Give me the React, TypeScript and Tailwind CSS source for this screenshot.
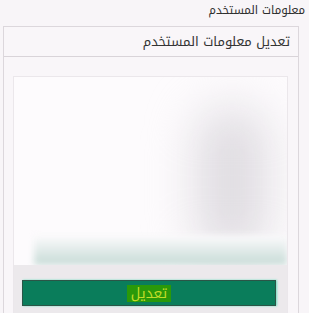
export default function App() {
  return (
    <div
      dir="rtl"
      className="h-[313px] w-[309px] overflow-hidden bg-[#f8f5f8] pr-[4px] pl-[3px] text-[#2f2f2f]"
      style={{
        fontFamily:
          '"Noto Kufi Arabic", "Noto Sans Arabic", "DejaVu Sans Condensed", "DejaVu Sans", sans-serif',
      }}
    >
      <h1 className="pt-[1px] text-[11.5px] leading-[19px]">معلومات المستخدم</h1>

      <div className="mt-[6px] mr-[6px] h-[300px] border border-[#dcd7dc] bg-[#f9f6f9]">
        <div className="flex h-[30px] items-center border-b border-[#d9d4d9] px-[8px]">
          <h2 className="text-[13px] leading-[20px] text-[#333]">
            تعديل معلومات المستخدم
          </h2>
        </div>

        <div className="mt-[19px] mr-[10px] ml-[9px] h-[260px] border border-[#ebe7eb] bg-[#ece9ec]">
          {/* blurred content */}
          <div className="relative h-[188px] overflow-hidden bg-[#fdfbfd]">
            <div className="absolute top-[30px] right-[20px] h-[150px] w-[70px] rounded-full bg-[#dedbe0] blur-xl" />
            <div className="absolute right-0 bottom-0 left-[20px] h-[30px] bg-gradient-to-b from-[#fdfbfd] to-[#c6dbd6] blur-[3px]" />
          </div>

          <div className="pt-[15px] pr-[11px]">
            <button className="flex h-[26px] w-[254px] items-center justify-center border border-[#2b5547] bg-[#0a7d5b] shadow-[1px_0_2px_#6fe0c0]">
              <span className="bg-[#2a9909] px-[4px] text-[14px] leading-[17px] text-[#c3dc2a]">
                تعديل
              </span>
            </button>
          </div>
        </div>
      </div>
    </div>
  );
}
